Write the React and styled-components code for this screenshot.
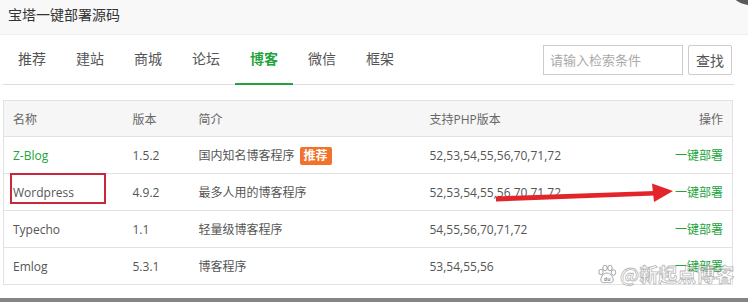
import React from 'react'
import styled, { createGlobalStyle } from 'styled-components'

const GlobalStyle = createGlobalStyle`
  html, body {
    margin: 0;
    padding: 0;
    background: #fff;
  }
  body {
    font-family: "Open Sans", "Noto Sans CJK SC", sans-serif;
    color: #555;
  }
`

const green = '#20a53a'

const Modal = styled.div`
  position: relative;
  width: 748px;
  height: 302px;
  overflow: hidden;
  display: flex;
  flex-direction: column;
  background: #fff;
`

const TitleBar = styled.div`
  height: 34px;
  line-height: 29px;
  padding-left: 8px;
  background: #f8f8f8;
  border-bottom: 1px solid #eee;
  font-size: 14px;
  color: #333;
  flex-shrink: 0;
`

const CloseDot = styled.div`
  position: absolute;
  left: 727px;
  top: -41px;
  width: 46px;
  height: 46px;
  border-radius: 50%;
  background: #5a5a5a;
`

const Body = styled.div`
  padding: 0 14px 0 3px;
`

const TabBar = styled.div`
  display: flex;
  align-items: center;
  height: 49px;
  border-bottom: 1px solid #ddd;
`

const Tabs = styled.div`
  display: flex;
  flex: 1;
  height: 100%;
`

const Tab = styled.div`
  width: 58px;
  text-align: center;
  line-height: 48px;
  font-size: 14px;
  box-sizing: border-box;
  color: ${p => (p.$active ? green : '#555')};
  font-weight: ${p => (p.$active ? 'bold' : 'normal')};
  border-bottom: 2px solid ${p => (p.$active ? green : 'transparent')};
  margin-bottom: -1px;
  height: 50px;
`

const Search = styled.div`
  display: flex;
  gap: 5px;
  margin-right: 2px;
`

const SearchInput = styled.input`
  width: 140px;
  height: 30px;
  box-sizing: border-box;
  border: 1px solid #ccc;
  padding: 0 6px;
  font-family: inherit;
  font-size: 13px;
  outline: none;
  &::placeholder {
    color: #aaa;
  }
`

const SearchButton = styled.button`
  width: 44px;
  height: 30px;
  border: 1px solid #ccc;
  border-radius: 2px;
  background: #fff;
  color: #555;
  font-family: inherit;
  font-size: 14px;
  padding: 0;
`

const TableWrap = styled.div`
  position: relative;
  margin-top: 15px;
  width: 730px;
`

const Table = styled.table`
  width: 100%;
  border-collapse: collapse;
  border: 1px solid #e2e2e2;
  border-bottom: none;
  font-size: 12px;
  table-layout: fixed;
`

const Th = styled.th`
  height: 35px;
  padding: 0 9px;
  font-weight: normal;
  text-align: ${p => p.$align || 'left'};
  color: #666;
  background: #f6f6f6;
  border-bottom: 1px solid #e2e2e2;
`

const Td = styled.td`
  height: 36px;
  padding: 0 9px;
  text-align: ${p => p.$align || 'left'};
  color: #555;
  border-bottom: 1px solid #e2e2e2;
  white-space: nowrap;
`

const Name = styled.span`
  color: ${p => (p.$green ? green : '#555')};
`

const Badge = styled.span`
  display: inline-block;
  margin-left: 5px;
  padding: 0 4px;
  height: 18px;
  line-height: 18px;
  border-radius: 2px;
  background: #f0722c;
  color: #fff;
  font-weight: bold;
`

const Deploy = styled.a`
  color: ${green};
  text-decoration: none;
`

const Highlight = styled.div`
  position: absolute;
  left: 7px;
  top: 73px;
  width: 96px;
  height: 31px;
  box-sizing: border-box;
  border: 2px solid #c8283c;
`

const Arrow = styled.svg`
  position: absolute;
  left: 0;
  top: 0;
  pointer-events: none;
`

const Watermark = styled.div`
  position: absolute;
  left: 597px;
  top: 260px;
  display: flex;
  align-items: center;
  gap: 3px;
  font-family: "Noto Sans CJK SC", sans-serif;
  font-size: 19px;
  font-weight: bold;
  color: rgba(255, 255, 255, 0.55);
  -webkit-text-stroke: 0.8px rgba(110, 110, 110, 0.5);
`

const BottomStrip = styled.div`
  margin-top: auto;
  height: 4px;
  background: #858585;
`

const columns = [
  { label: '名称', width: 120 },
  { label: '版本', width: 66 },
  { label: '简介', width: 231 },
  { label: '支持PHP版本' },
  { label: '操作', width: 110, align: 'right' },
]

const rows = [
  { name: 'Z-Blog', version: '1.5.2', desc: '国内知名博客程序', hot: true, php: '52,53,54,55,56,70,71,72' },
  { name: 'Wordpress', version: '4.9.2', desc: '最多人用的博客程序', php: '52,53,54,55,56,70,71,72' },
  { name: 'Typecho', version: '1.1', desc: '轻量级博客程序', php: '54,55,56,70,71,72' },
  { name: 'Emlog', version: '5.3.1', desc: '博客程序', php: '53,54,55,56' },
]

const tabs = ['推荐', '建站', '商城', '论坛', '博客', '微信', '框架']

function Paw() {
  return (
    <svg width="20" height="20" viewBox="0 0 20 20">
      <g fill="rgba(255,255,255,0.6)" stroke="rgba(110,110,110,0.6)" strokeWidth="1">
        <ellipse cx="4" cy="8" rx="2.2" ry="2.8" />
        <ellipse cx="8" cy="4" rx="2.2" ry="2.8" />
        <ellipse cx="13" cy="4" rx="2.2" ry="2.8" />
        <ellipse cx="16.5" cy="8.5" rx="2.2" ry="2.8" />
        <path d="M10 9 C6 9 3 14 4 17 C5 19.5 8 18.5 10 18.5 C12 18.5 15 19.5 16 17 C17 14 14 9 10 9 Z" />
      </g>
      <text x="7" y="17" fontSize="5" fill="rgba(110,110,110,0.8)" fontFamily="Open Sans">du</text>
    </svg>
  )
}

export default function App() {
  return (
    <>
      <GlobalStyle />
      <Modal>
        <CloseDot />
        <TitleBar>宝塔一键部署源码</TitleBar>
        <Body>
          <TabBar>
            <Tabs>
              {tabs.map(t => (
                <Tab key={t} $active={t === '博客'}>{t}</Tab>
              ))}
            </Tabs>
            <Search>
              <SearchInput placeholder="请输入检索条件" />
              <SearchButton>查找</SearchButton>
            </Search>
          </TabBar>
          <TableWrap>
            <Table>
              <colgroup>
                {columns.map(c => (
                  <col key={c.label} style={c.width ? { width: c.width } : undefined} />
                ))}
              </colgroup>
              <thead>
                <tr>
                  {columns.map(c => (
                    <Th key={c.label} $align={c.align}>{c.label}</Th>
                  ))}
                </tr>
              </thead>
              <tbody>
                {rows.map(r => (
                  <tr key={r.name}>
                    <Td><Name $green={r.hot}>{r.name}</Name></Td>
                    <Td>{r.version}</Td>
                    <Td>
                      {r.desc}
                      {r.hot && <Badge>推荐</Badge>}
                    </Td>
                    <Td>{r.php}</Td>
                    <Td $align="right"><Deploy href="#">一键部署</Deploy></Td>
                  </tr>
                ))}
              </tbody>
            </Table>
            <Highlight />
            <Arrow width="730" height="190" viewBox="0 0 730 190">
              <path d="M493 96.5 L652 91 L652 95.5 L493 101.5 Z" fill="#e3242b" />
              <path d="M670 91 L649 83.5 L651 102 Z" fill="#e3242b" />
            </Arrow>
          </TableWrap>
        </Body>
        <Watermark>
          <Paw />
          <span>@新起点博客</span>
        </Watermark>
        <BottomStrip />
      </Modal>
    </>
  )
}
